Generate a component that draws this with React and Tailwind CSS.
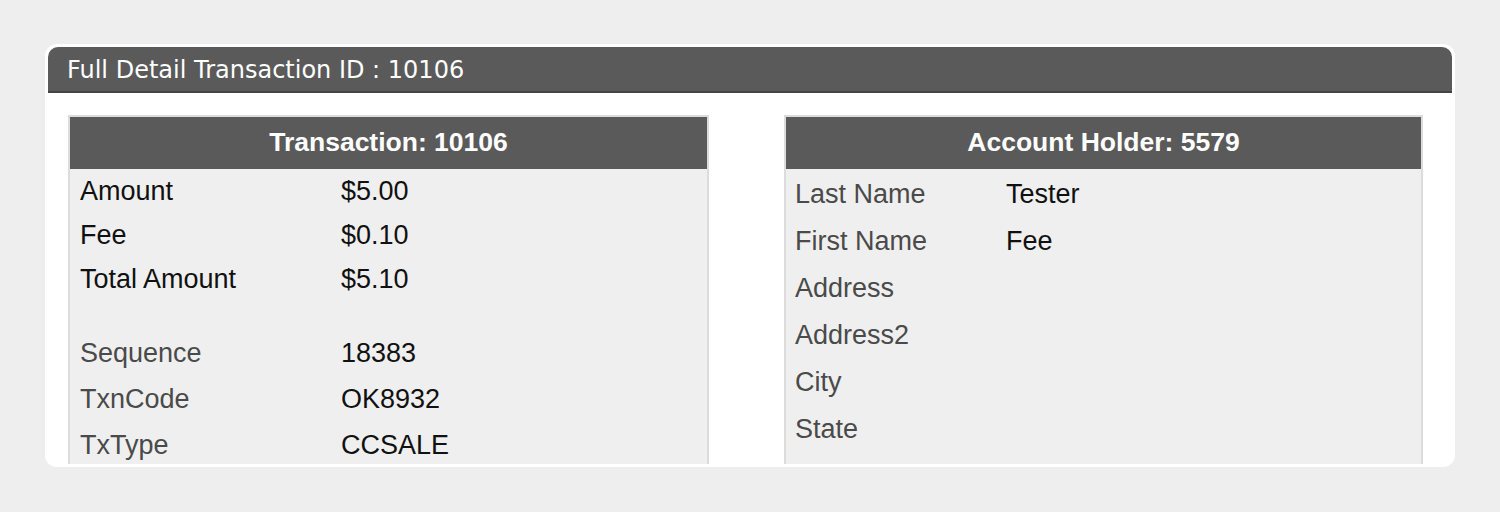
import React from 'react';

const transactionRows = [
  { label: 'Amount', value: '$5.00', strong: true },
  { label: 'Fee', value: '$0.10', strong: true },
  { label: 'Total Amount', value: '$5.10', strong: true },
  { spacer: true },
  { label: 'Sequence', value: '18383' },
  { label: 'TxnCode', value: 'OK8932' },
  { label: 'TxType', value: 'CCSALE' },
];

const holderRows = [
  { label: 'Last Name', value: 'Tester' },
  { label: 'First Name', value: 'Fee' },
  { label: 'Address', value: '' },
  { label: 'Address2', value: '' },
  { label: 'City', value: '' },
  { label: 'State', value: '' },
  { label: 'Zip', value: '10001' },
];

const Panel = ({ title, children, className }) => (
  <div className={`flex flex-col border-2 border-[#dcdcdc] bg-[#efefef] ${className}`}>
    <div className="flex h-[52px] items-center justify-center bg-[#5a5a5a] text-[26.5px] font-bold text-white">
      {title}
    </div>
    {children}
  </div>
);

export default function App() {
  return (
    <div className="min-h-screen bg-[#eeeeee] pt-[44px] pl-[45px] font-['Liberation_Sans',Arial,sans-serif]">
      <div className="flex h-[423px] w-[1410px] flex-col overflow-hidden rounded-[12px] bg-white p-[3px]">
        <div className="flex h-[46px] shrink-0 items-center rounded-t-[10px] border-b-2 border-[#444444] bg-[#5a5a5a] pt-[2px] pl-[19px] font-['DejaVu_Sans',sans-serif] text-[24px] text-white">
          Full Detail Transaction ID : 10106
        </div>
        <div className="flex h-[371px] items-start gap-[75px] overflow-hidden pt-[22px] pl-[20px]">
          <Panel title="Transaction: 10106" className="w-[641px]">
            <div className="flex flex-col pl-[10px] text-[27px]">
              {transactionRows.map((row, i) =>
                row.spacer ? (
                  <div key={i} className="h-[29px]" />
                ) : (
                  <div key={i} className={`flex items-center ${row.strong ? 'h-[44px]' : 'h-[46px]'}`}>
                    <span className={`w-[261px] ${row.strong ? 'text-[#111111]' : 'text-[#4a4a4a]'}`}>{row.label}</span>
                    <span className="text-[#111111]">{row.value}</span>
                  </div>
                )
              )}
            </div>
          </Panel>
          <Panel title="Account Holder: 5579" className="w-[639px]">
            <div className="flex flex-col pt-[2px] pl-[9px] text-[27px]">
              {holderRows.map((row, i) => (
                <div key={i} className="flex h-[47px] items-center">
                  <span className="w-[211px] text-[#4a4a4a]">{row.label}</span>
                  <span className="text-[#111111]">{row.value}</span>
                </div>
              ))}
            </div>
          </Panel>
        </div>
      </div>
    </div>
  );
}
